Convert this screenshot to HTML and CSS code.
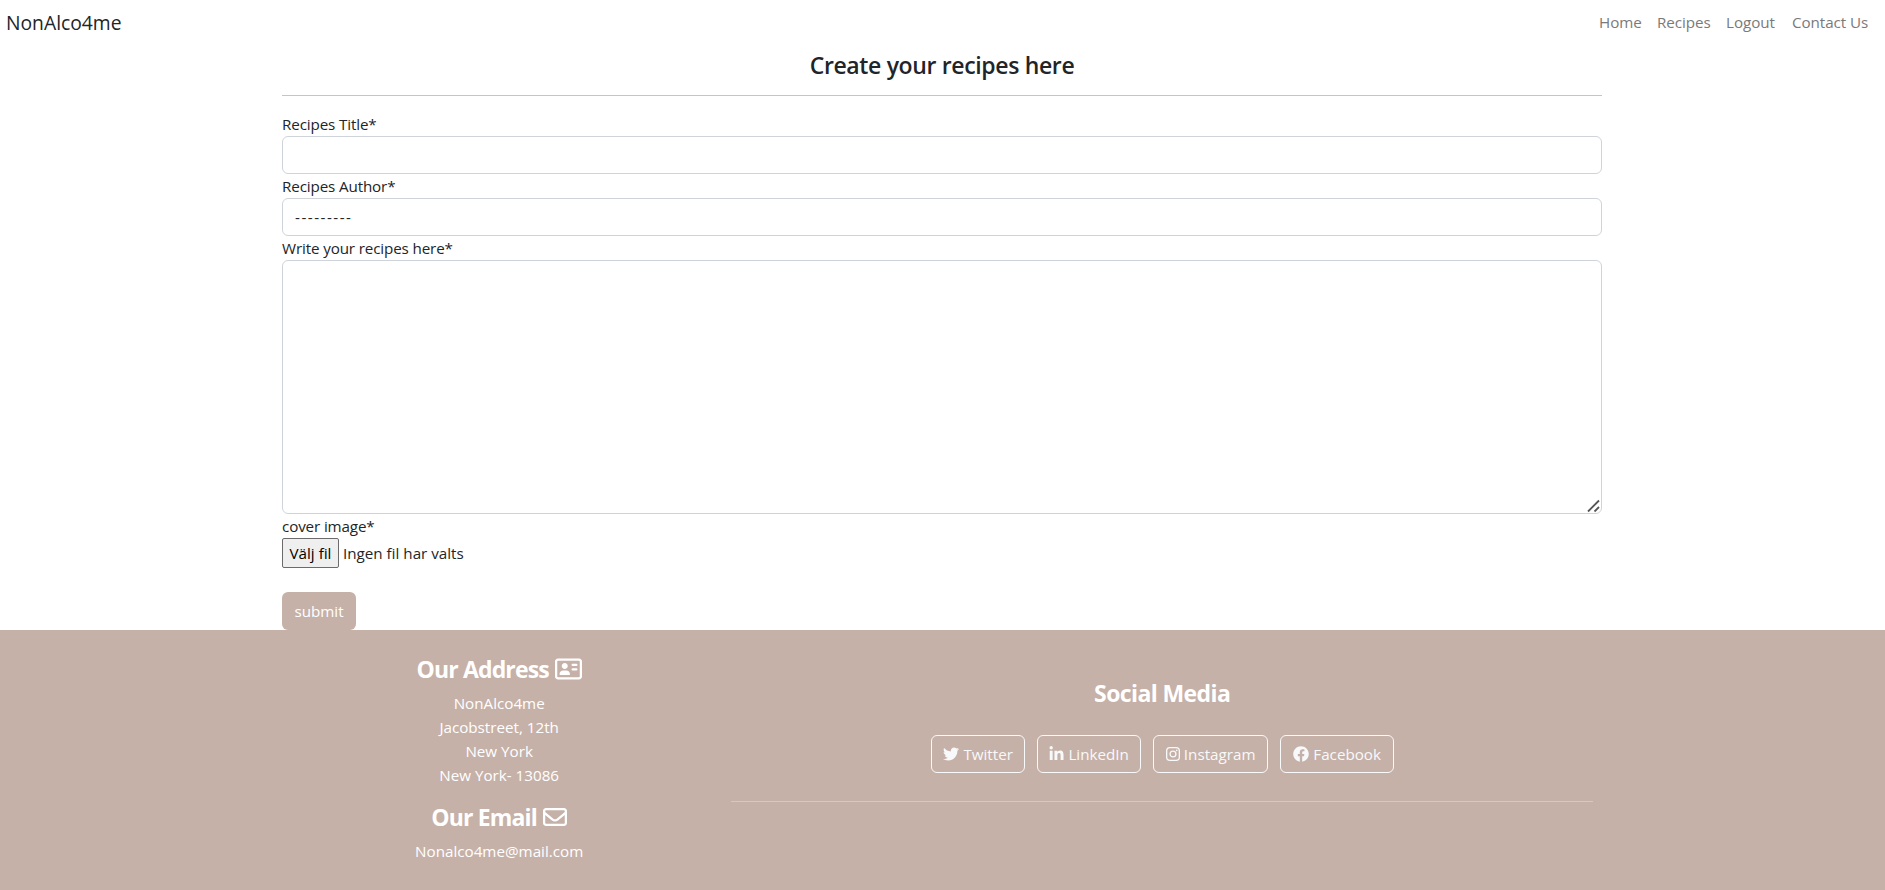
FILE: index.html
```html
<!DOCTYPE html>
<html lang="en">
<head>
<meta charset="utf-8">
<title>NonAlco4me</title>
<link rel="stylesheet" href="styles.css">
</head>
<body>
<nav class="navbar">
  <a class="brand">NonAlco4me</a>
  <div class="nav-links"><a class="home">Home</a><a class="recipes">Recipes</a><a class="logout">Logout</a><a class="contact">Contact Us</a></div>
</nav>
<main class="container">
  <h1 class="title">Create your recipes here</h1>
  <hr class="rule">
  <form class="form">
    <label>Recipes Title*</label>
    <input class="control" type="text">
    <label>Recipes Author*</label>
    <div class="control select">---------</div>
    <label>Write your recipes here*</label>
    <div class="control area"><svg class="grip" width="14" height="14" viewBox="0 0 14 14"><path d="M1 12.500 12 1.500M7.500 12.500 12 8" stroke="#555" stroke-width="1.800" fill="none"/></svg></div>
    <label>cover image*</label>
    <div class="file"><button type="button" class="file-btn">Välj fil</button><span>Ingen fil har valts</span></div>
    <button type="button" class="submit">submit</button>
  </form>
</main>
<footer class="footer">
  <div class="row">
    <section class="about">
      <h2 class="heading"><span>Our Address</span>
        <svg width="27" height="24" viewBox="0 0 576 512"><path fill="currentColor" fill-rule="evenodd" d="M512 32H64C28.700 32 0 60.700 0 96v320c0 35.300 28.700 64 64 64h448c35.300 0 64-28.700 64-64V96c0-35.300-28.700-64-64-64zm16 384c0 8.800-7.200 16-16 16H64c-8.800 0-16-7.200-16-16V96c0-8.800 7.200-16 16-16h448c8.800 0 16 7.200 16 16zM208 256c35.300 0 64-28.700 64-64s-28.700-64-64-64-64 28.700-64 64 28.700 64 64 64zm32 32h-64c-44.200 0-80 35.800-80 80 0 8.800 7.200 16 16 16h192c8.800 0 16-7.200 16-16 0-44.200-35.800-80-80-80zM376 144h80a24 24 0 0 1 0 48h-80a24 24 0 0 1 0-48zm0 96h80a24 24 0 0 1 0 48h-80a24 24 0 0 1 0-48z"/></svg></h2>
      <p>NonAlco4me<br>Jacobstreet, 12th<br>New York<br>New York- 13086</p>
      <h2 class="heading email"><span>Our Email</span>
        <svg width="24" height="24" viewBox="0 0 512 512"><path fill="currentColor" fill-rule="evenodd" d="M64 112c-8.800 0-16 7.200-16 16v22.100l172.500 141.600c20.700 17 50.400 17 71.100 0L464 150.100V128c0-8.800-7.200-16-16-16zM48 212.200V384c0 8.800 7.200 16 16 16h384c8.800 0 16-7.200 16-16V212.200L322 328.800c-38.400 31.500-93.700 31.500-132 0zM0 128c0-35.300 28.700-64 64-64h384c35.300 0 64 28.700 64 64v256c0 35.300-28.700 64-64 64H64c-35.300 0-64-28.700-64-64z"/></svg></h2>
      <p>Nonalco4me@mail.com</p>
    </section>
    <section class="social">
      <h2 class="heading wide"><span>Social Media</span></h2>
      <div class="buttons">
        <a class="btn twitter"><svg width="16" height="16" viewBox="0 0 512 512"><path fill="currentColor" d="M459.370 151.716c.325 4.548.325 9.097.325 13.645 0 138.720-105.583 298.558-298.558 298.558-59.452 0-114.680-17.219-161.137-47.106 8.447.974 16.568 1.299 25.340 1.299 49.055 0 94.213-16.568 130.274-44.832-46.132-.975-84.792-31.188-98.112-72.772 6.498.974 12.995 1.624 19.818 1.624 9.421 0 18.843-1.300 27.614-3.573-48.081-9.747-84.143-51.980-84.143-102.985v-1.299c13.969 7.797 30.214 12.670 47.431 13.319-28.264-18.843-46.781-51.005-46.781-87.391 0-19.492 5.197-37.360 14.294-52.954 51.655 63.675 129.300 105.258 216.365 109.807-1.624-7.797-2.599-15.918-2.599-24.040 0-57.828 46.782-104.934 104.934-104.934 30.213 0 57.502 12.670 76.670 33.137 23.715-4.548 46.456-13.320 66.599-25.340-7.798 24.366-24.366 44.833-46.132 57.827 21.117-2.273 41.584-8.122 60.426-16.243-14.292 20.791-32.161 39.308-52.628 54.253z"/></svg><span>Twitter</span></a>
        <a class="btn linkedin"><svg width="15" height="16" viewBox="0 0 448 512"><path fill="currentColor" d="M100.280 448H7.400V148.900h92.880zM53.790 108.100C24.090 108.100 0 83.500 0 53.800a53.790 53.790 0 0 1 107.580 0c0 29.700-24.100 54.300-53.790 54.300zM447.900 448h-92.680V302.400c0-34.700-.7-79.200-48.290-79.200-48.290 0-55.690 37.700-55.690 76.700V448h-92.780V148.900h89.080v40.800h1.300c12.400-23.500 42.690-48.300 87.880-48.300 94 0 111.280 61.900 111.280 142.300V448z"/></svg><span>LinkedIn</span></a>
        <a class="btn instagram"><svg width="14" height="16" viewBox="0 0 448 512"><g fill="none" stroke="currentColor" stroke-width="42"><rect x="21" y="53" width="406" height="406" rx="105"/><circle cx="224" cy="256" r="94"/></g><circle cx="343" cy="137" r="27" fill="currentColor"/></svg><span>Instagram</span></a>
        <a class="btn facebook"><svg width="16" height="16" viewBox="0 0 512 512"><path fill="currentColor" d="M504 256C504 119 393 8 256 8S8 119 8 256c0 123.780 90.690 226.380 209.250 245V327.690h-63V256h63v-54.640c0-62.150 37-96.480 93.670-96.480 27.140 0 55.520 4.840 55.520 4.840v61h-31.280c-30.800 0-40.410 19.120-40.410 38.730V256h68.780l-11 71.690h-57.780V501C413.310 482.380 504 379.780 504 256z"/></svg><span>Facebook</span></a>
      </div>
      <hr class="footer-rule">
    </section>
  </div>
</footer>
</body>
</html>
```
FILE: styles.css
```css
* { box-sizing: border-box; }
body { margin: 0; background: #fff; color: #212529; font: 15.2px/24px "Open Sans", "Noto Sans", sans-serif; white-space: nowrap; }
h1, h2, p { margin: 0; }
.navbar { height: 50px; padding: 0 16px 5px 6px; display: flex; justify-content: space-between; align-items: center; }
.brand { font-size: 19.3px; line-height: 30px; }
.nav-links { display: flex; gap: 16px; padding-bottom: 1px; color: #7a7a7a; letter-spacing: -0.05px; }
.home { width: 42px; }
.recipes { width: 53px; }
.logout { width: 50px; }
.contact { width: 77px; }
.container { width: 1320px; margin: 0 0 0 282px; }
.title { height: 29px; font-size: 23px; line-height: 30px; font-weight: 600; letter-spacing: -0.35px; text-align: center; }
.rule { height: 1px; margin: 16px 0; border: 0; background: #c4c5c6; }
.form { display: flex; flex-direction: column; align-items: flex-start; }
.form label { letter-spacing: -0.13px; }
.control { width: 100%; height: 38px; padding: 6px 12px; border: 1px solid #ced4da; border-radius: 6px; font: inherit; background: #fff; }
.select { letter-spacing: 1.5px; }
.area { height: 254px; padding: 0; display: flex; justify-content: flex-end; align-items: flex-end; }
.grip { display: block; }
.file { height: 30px; display: flex; align-items: center; gap: 4px; }
.file-btn { width: 57px; height: 30px; padding: 0; border: 1px solid #6b6b6b; border-radius: 2px; background: #efefef; color: #000; font: inherit; }
.submit { width: 74px; height: 38px; margin-top: 24px; padding: 0; border: 0; border-radius: 6px; background: #c6b1a8; color: #fff; font: inherit; }
.footer { height: 260px; background: #c6b1a8; color: #fff; }
.row { width: 1327px; margin: 0 0 0 278px; display: grid; grid-template-columns: 1fr 2fr; text-align: center; }
.about { padding-top: 24px; }
.about p { margin-bottom: 16px; }
.heading { height: 29px; margin-bottom: 8px; display: flex; justify-content: center; align-items: center; gap: 6px; font-size: 23px; line-height: 29px; font-weight: 700; letter-spacing: -0.85px; }
.heading span { padding-top: 1px; }
.email { height: 28px; }
.wide { letter-spacing: -0.6px; }
.social { padding: 48px 12px 0 11px; }
.buttons { margin-top: 28px; padding-left: 1px; display: flex; justify-content: center; gap: 12px; color: #f8f9fa; }
.btn { height: 38px; border: 1px solid #f8f9fa; border-radius: 6px; display: flex; align-items: center; justify-content: center; gap: 4px; }
.twitter { width: 94px; }
.linkedin { width: 104px; }
.instagram { width: 115px; }
.facebook { width: 114px; }
.footer-rule { height: 1px; margin: 28px 0 0; border: 0; background: #d6c7c0; }
```
